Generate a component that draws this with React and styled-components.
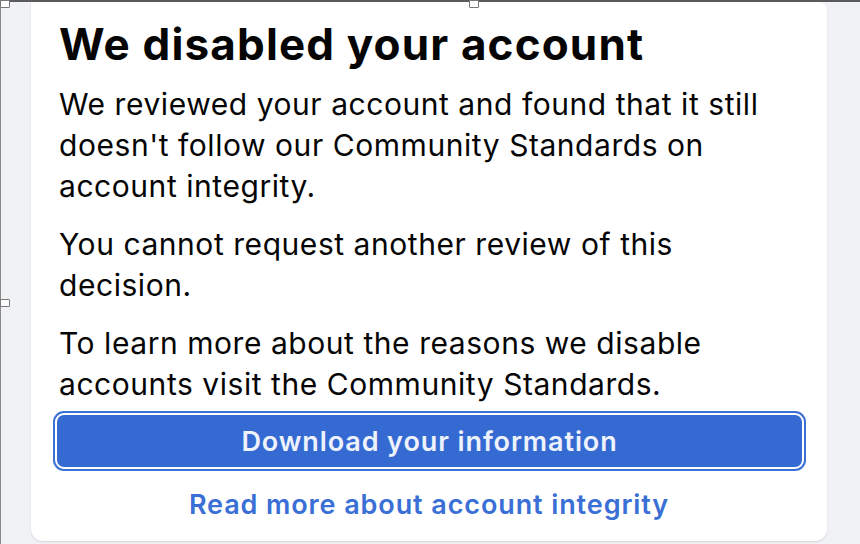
import React from 'react';
import styled, {createGlobalStyle} from 'styled-components';

const GlobalStyle = createGlobalStyle`
    html, body {
        margin: 0;
        padding: 0;
        height: 100%;
        overflow: hidden;
    }
    body {
        background-color: #f0f2f5;
        font-family: Inter, "Noto Sans", sans-serif;
    }
`;

const Screen = styled.div`
    position: relative;
    width: 860px;
    height: 544px;
    box-sizing: border-box;
    border-top: 2px solid #5b5b5b;
    border-left: 1px solid #8a8a8a;
    padding-left: 30px;
    background-color: #f0f2f5;
`;

const Handle = styled.div`
    position: absolute;
    width: 10px;
    height: 8px;
    background: #fff;
    border: 1px solid #777;
    border-radius: 1px;
    box-sizing: border-box;
    left: ${p => p.x}px;
    top: ${p => p.y}px;
`;

const Card = styled.div`
    width: 796px;
    height: 539px;
    box-sizing: border-box;
    background: #fff;
    border-radius: 0 8px 12px 12px;
    box-shadow: 0 1px 2px rgba(0, 0, 0, 0.12);
    padding: 18px 28px 0;
    display: flex;
    flex-direction: column;
`;

const Title = styled.h1`
    margin: 0;
    font-size: 44px;
    line-height: 48px;
    font-weight: 700;
    color: #050505;
    letter-spacing: 1.15px;
`;

const Text = styled.p`
    margin: ${p => (p.first ? '16px' : '17px')} 0 0;
    font-size: 30px;
    line-height: 41px;
    color: #050505;
    letter-spacing: 0.55px;
`;

const Button = styled.button`
    margin: 8px -5px 0 -4px;
    height: 56px;
    border: 2px solid #fff;
    border-radius: 9px;
    box-shadow: 0 0 0 2px #3a6fd6;
    background: #356ad3;
    color: #eef2fb;
    font-family: inherit;
    font-size: 27px;
    font-weight: 600;
    letter-spacing: 0.9px;
    cursor: pointer;
`;

const Link = styled.a`
    margin-top: 17px;
    text-align: center;
    font-size: 27px;
    line-height: 38px;
    font-weight: 600;
    letter-spacing: 0.9px;
    color: #3a6fd6;
    text-decoration: none;
`;

export default function App() {
    return (
        <Screen>
            <GlobalStyle />
            <Card>
                <Title>We disabled your account</Title>
                <Text first>
                    We reviewed your account and found that it still doesn't follow our Community Standards on account integrity.
                </Text>
                <Text>You cannot request another review of this decision.</Text>
                <Text>To learn more about the reasons we disable accounts visit the Community Standards.</Text>
                <Button>Download your information</Button>
                <Link href="#">Read more about account integrity</Link>
            </Card>
            <Handle x={-1} y={-2} />
            <Handle x={468} y={-2} />
            <Handle x={-1} y={297} />
        </Screen>
    );
}
